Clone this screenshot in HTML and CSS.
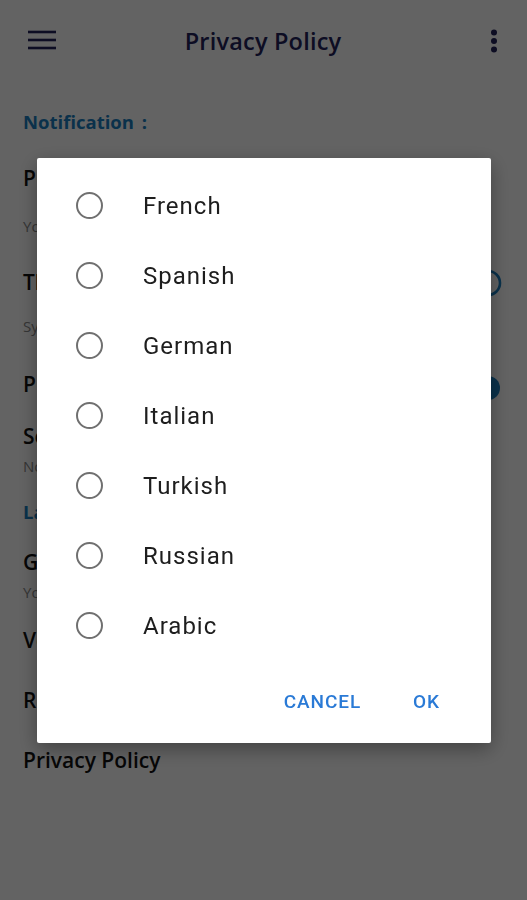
FILE: index.html
```html
<!DOCTYPE html>
<html lang="en">
<head>
<meta charset="utf-8">
<title>Privacy Policy</title>
<link rel="stylesheet" href="styles.css">
</head>
<body>
<div class="page">
  <header class="appbar">
    <svg class="icon-menu" width="28" height="22" viewBox="0 0 28 22"><g stroke="#22225a" stroke-width="2.6" stroke-linecap="butt"><line x1="0" y1="3" x2="28" y2="3"/><line x1="0" y1="11" x2="28" y2="11"/><line x1="0" y1="19" x2="28" y2="19"/></g></svg>
    <h1 class="title">Privacy Policy</h1>
    <svg class="icon-more" width="8" height="24" viewBox="0 0 8 24"><g fill="#22225a"><circle cx="4" cy="3.5" r="3"/><circle cx="4" cy="12" r="3"/><circle cx="4" cy="20.5" r="3"/></g></svg>
  </header>
  <main class="list">
    <div class="section">Notification <span class="colon">:</span></div>
    <div class="row r1"><div class="row-title">Push</div></div>
    <div class="row-sub s1">Your alerts</div>
    <div class="row r2"><div class="row-title">Theme</div>
      <svg class="row-icon" width="28" height="28" viewBox="0 0 28 28"><circle cx="14" cy="14" r="12" fill="none" stroke="#1a7fc0" stroke-width="2.6"/><circle cx="14" cy="14" r="2" fill="#1a7fc0"/></svg>
    </div>
    <div class="row-sub s2">System</div>
    <div class="row r3"><div class="row-title">Play</div>
      <span class="switch"><span class="track"></span><span class="thumb"></span></span>
    </div>
    <div class="row r4"><div class="row-title">Sound</div></div>
    <div class="row-sub s4">None</div>
    <div class="section sec2">Language <span class="colon">:</span></div>
    <div class="row r5"><div class="row-title">General</div></div>
    <div class="row-sub s5">Your app</div>
    <div class="row r6"><div class="row-title">Version</div></div>
    <div class="row r7"><div class="row-title">Rate Us</div></div>
    <div class="row r7"><div class="row-title">Privacy Policy</div></div>
  </main>
</div>

<div class="scrim">
  <div class="dialog" role="dialog">
    <ul class="options">
      <li class="option"><span class="radio"></span><span class="label">French</span></li>
      <li class="option"><span class="radio"></span><span class="label">Spanish</span></li>
      <li class="option"><span class="radio"></span><span class="label">German</span></li>
      <li class="option"><span class="radio"></span><span class="label">Italian</span></li>
      <li class="option"><span class="radio"></span><span class="label">Turkish</span></li>
      <li class="option"><span class="radio"></span><span class="label">Russian</span></li>
      <li class="option"><span class="radio"></span><span class="label">Arabic</span></li>
    </ul>
    <div class="actions">
      <button class="btn">CANCEL</button>
      <button class="btn">OK</button>
    </div>
  </div>
</div>
</body>
</html>
```

FILE: styles.css
```css
* { box-sizing: border-box; }
html, body { margin: 0; padding: 0; }
body {
  width: 527px;
  height: 900px;
  overflow: hidden;
  background: #ffffff;
  font-family: "Open Sans", "Liberation Sans", sans-serif;
}
.page { height: 900px; }

.appbar {
  height: 82px;
  display: grid;
  grid-template-columns: 1fr auto 1fr;
  align-items: center;
  padding: 0 29px 0 28px;
}
.icon-menu { display: block; margin-top: -2px; }
.icon-more { display: block; margin-top: -1px; justify-self: end; }
.title {
  margin: 0;
  font-size: 23.5px;
  font-weight: 600;
  color: #22225a;
  letter-spacing: 0.2px;
}

.list { padding: 0 23px; }
.section {
  margin-top: 18px;
  line-height: 44px;
  height: 44px;
  font-size: 18.5px;
  font-weight: 700;
  color: #1a7fc0;
}
.colon { margin-left: 3px; }
.sec2 { margin-top: 12px; }
.row {
  display: flex;
  align-items: center;
  justify-content: space-between;
  height: 32px;
}
.row-title {
  font-size: 21px;
  font-weight: 600;
  color: #111;
}
.row-sub {
  height: 24px;
  line-height: 24px;
  font-size: 15px;
  color: #8a8a8a;
}
.r1 { margin-top: 18px; }
.s1 { margin-top: 20px; }
.r2 { margin-top: 28px; }
.s2 { margin-top: 16px; }
.r3 { margin-top: 30px; }
.r4 { margin-top: 20px; }
.s4 { margin-top: 2px; }
.r5 { margin-top: 12px; }
.s5 { margin-top: 2px; }
.r6 { margin-top: 20px; }
.r7 { margin-top: 28px; }

.row-icon { display: block; margin-right: 2px; margin-top: 2px; }

.switch { position: relative; width: 44px; height: 28px; margin-right: 4px; }
.track {
  position: absolute; left: 4px; right: 4px; top: 11px; height: 14px;
  border-radius: 7px; background: #8cc4e8;
}
.thumb {
  position: absolute; right: 0; top: 6px; width: 24px; height: 24px;
  border-radius: 50%; background: #1a7fc0;
}

.scrim {
  position: fixed;
  inset: 0;
  background: rgba(0, 0, 0, 0.61);
  display: flex;
  align-items: center;
  justify-content: center;
}
.dialog {
  width: 454px;
  height: 585px;
  background: #fff;
  border-radius: 2px;
  box-shadow: 0 6px 20px rgba(0,0,0,0.35);
  display: flex;
  flex-direction: column;
  margin-left: 1px;
}
.options {
  list-style: none;
  margin: 0;
  padding: 13px 0 0 0;
}
.option {
  height: 70px;
  display: flex;
  align-items: center;
  padding-left: 39px;
}
.radio {
  width: 27px;
  height: 27px;
  border: 2.5px solid #707070;
  border-radius: 50%;
  flex: none;
}
.label {
  margin-left: 40px;
  font-family: Roboto, "Liberation Sans", sans-serif;
  font-size: 24px;
  color: #1e1e1e;
  letter-spacing: 1px;
}
.actions {
  flex: 1;
  display: flex;
  justify-content: flex-end;
  align-items: center;
  padding-right: 39px;
  gap: 28px;
}
.btn {
  border: 0;
  background: none;
  padding: 8px 12px;
  font-family: Roboto, "Liberation Sans", sans-serif;
  font-size: 19px;
  font-weight: 500;
  color: #2a7ad6;
  letter-spacing: 0.9px;
  cursor: pointer;
}
```
